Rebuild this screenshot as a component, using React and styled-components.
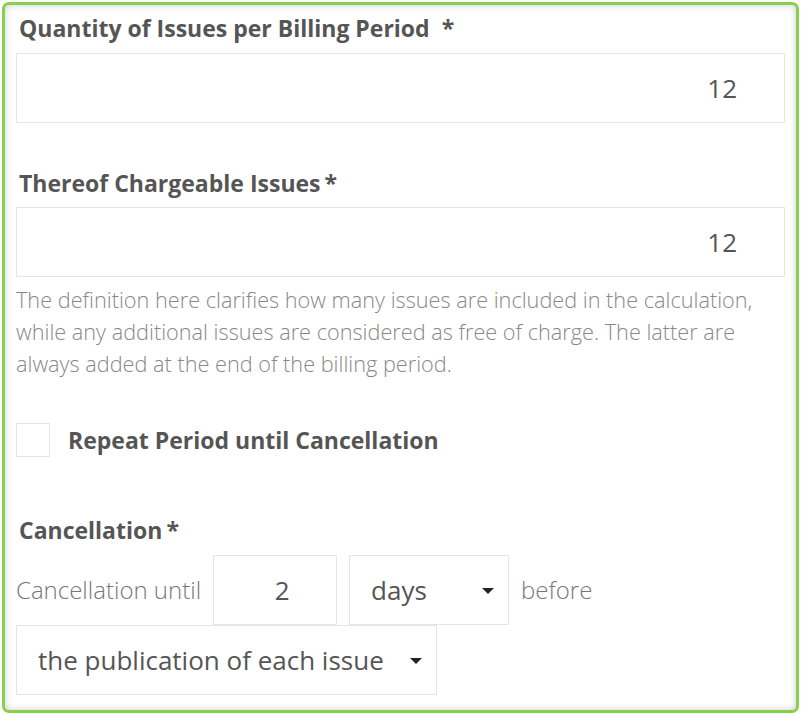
import React from "react";
import styled, { createGlobalStyle } from "styled-components";

const GlobalStyle = createGlobalStyle`
  html, body {
    margin: 0;
    padding: 0;
    background: #fff;
  }
  body {
    font-family: "Open Sans", "Liberation Sans", sans-serif;
    color: #555;
  }
`;

const Page = styled.div`
  padding: 2px;
  box-sizing: border-box;
  width: 801px;
  height: 715px;
`;

const Panel = styled.div`
  box-sizing: border-box;
  height: 711px;
  border: 3px solid #88d04a;
  border-radius: 7px;
  box-shadow: inset 0 0 7px rgba(0, 0, 0, 0.2);
  padding: 8px 11px 0 11px;
`;

const Label = styled.div`
  font: bold 23px/30px "Open Sans", "Liberation Sans", sans-serif;
  color: #555;
  padding-left: 3px;
  margin-top: ${(p) => p.top || 0}px;
  margin-bottom: ${(p) => p.bottom || 10}px;
`;

const Star = styled.span`
  margin-left: ${(p) => p.gap || 4}px;
`;

const NumberBox = styled.div`
  box-sizing: border-box;
  height: 70px;
  border: 1px solid #e6e6e6;
  background: #fff;
  display: flex;
  align-items: center;
  justify-content: flex-end;
  padding-right: 47px;
  font: 26px "Open Sans", "Liberation Sans", sans-serif;
  color: #555;
`;

const Help = styled.p`
  margin: 7px 0 0 0;
  font: 300 21.7px/32px "Open Sans", "Liberation Sans", sans-serif;
  color: #888;
`;

const CheckRow = styled.div`
  display: flex;
  align-items: center;
  margin-top: 43px;
`;

const CheckBox = styled.span`
  box-sizing: border-box;
  width: 34px;
  height: 34px;
  border: 1px solid #e6e6e6;
  background: #fff;
`;

const CheckLabel = styled.span`
  margin-left: 18px;
  font: bold 23px/30px "Open Sans", "Liberation Sans", sans-serif;
  color: #555;
`;

const InlineRow = styled.div`
  display: flex;
  flex-wrap: wrap;
  align-items: center;
  column-gap: 12px;
`;

const InlineText = styled.span`
  font: 300 24px/30px "Open Sans", "Liberation Sans", sans-serif;
  color: #777;
`;

const SmallBox = styled.div`
  box-sizing: border-box;
  width: ${(p) => p.w}px;
  height: 70px;
  border: 1px solid #e6e6e6;
  background: #fff;
  display: flex;
  align-items: center;
  justify-content: center;
  padding-left: 14px;
  font: 26px "Open Sans", "Liberation Sans", sans-serif;
  color: #555;
`;

const Select = styled.div`
  box-sizing: border-box;
  width: ${(p) => p.w}px;
  height: 70px;
  border: 1px solid #e6e6e6;
  background: #fff;
  display: flex;
  align-items: center;
  justify-content: space-between;
  padding: 0 14px 0 21px;
  font: 26px "Open Sans", "Liberation Sans", sans-serif;
  color: #555;
`;

const Caret = styled.span`
  width: 0;
  height: 0;
  border-left: 6px solid transparent;
  border-right: 6px solid transparent;
  border-top: 6px solid #222;
  margin-top: 2px;
`;

export default function App() {
  return (
    <>
      <GlobalStyle />
      <Page>
        <Panel>
          <Label>
            Quantity of Issues per Billing Period <Star gap={6}>*</Star>
          </Label>
          <NumberBox>12</NumberBox>

          <Label top={45} bottom={9}>
            Thereof Chargeable Issues<Star>*</Star>
          </Label>
          <NumberBox>12</NumberBox>

          <Help>
            The definition here clarifies how many issues are included in the calculation,
            while any additional issues are considered as free of charge. The latter are
            always added at the end of the billing period.
          </Help>

          <CheckRow>
            <CheckBox />
            <CheckLabel>Repeat Period until Cancellation</CheckLabel>
          </CheckRow>

          <Label top={58}>
            Cancellation<Star>*</Star>
          </Label>
          <InlineRow>
            <InlineText>Cancellation until</InlineText>
            <SmallBox w={124}>2</SmallBox>
            <Select w={160}>
              days
              <Caret />
            </Select>
            <InlineText>before</InlineText>
            <Select w={421}>
              the publication of each issue
              <Caret />
            </Select>
          </InlineRow>
        </Panel>
      </Page>
    </>
  );
}
